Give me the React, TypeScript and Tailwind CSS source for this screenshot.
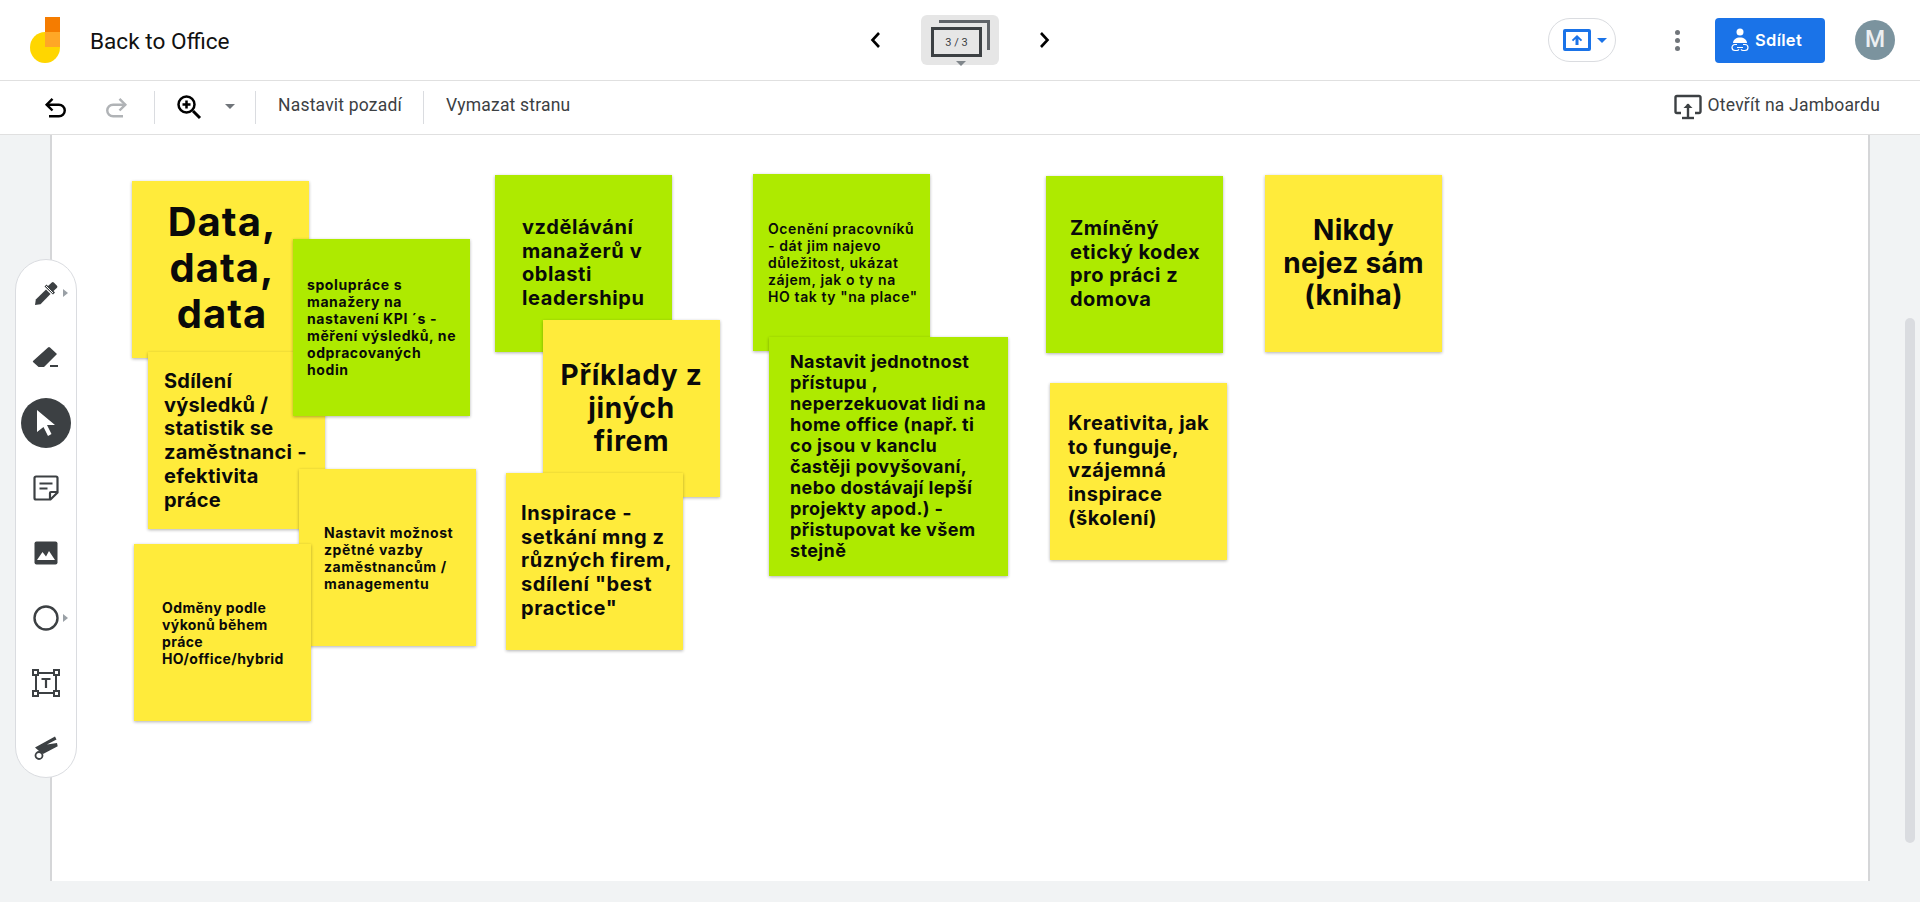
import React from "react";

const notes = [
  { cls: "left-[80px] top-[46px] w-[177px] h-[177px] bg-[#ffeb3b] pl-[3px] pt-[18px] text-center text-[40px] leading-[46px] font-bold tracking-[1px]", lines: ["Data,", "data,", "data"] },
  { cls: "left-[96px] top-[217px] w-[177px] h-[177px] bg-[#ffeb3b] pl-[16px] pt-[18px] text-[20px] leading-[23.7px] font-bold tracking-[0.25px]", lines: ["Sdílení", "výsledků /", "statistik se", "zaměstnanci -", "efektivita", "práce"] },
  { cls: "left-[241px] top-[104px] w-[177px] h-[177px] bg-[#aeea00] pl-[14px] pt-[37px] text-[14px] leading-[17px] font-bold tracking-[0.6px]", lines: ["spolupráce s", "manažery na", "nastavení KPI ´s -", "měření výsledků, ne", "odpracovaných", "hodin"] },
  { cls: "left-[247px] top-[334px] w-[177px] h-[177px] bg-[#ffeb3b] pl-[25px] pt-[55px] text-[14px] leading-[17px] font-bold tracking-[0.6px]", lines: ["Nastavit možnost", "zpětné vazby", "zaměstnancům /", "managementu"] },
  { cls: "left-[82px] top-[409px] w-[177px] h-[177px] bg-[#ffeb3b] pl-[28px] pt-[55px] text-[14px] leading-[17px] font-bold tracking-[0.4px]", lines: ["Odměny podle", "výkonů během", "práce", "HO/office/hybrid"] },
  { cls: "left-[443px] top-[40px] w-[177px] h-[177px] bg-[#aeea00] pl-[27px] pt-[41px] text-[20px] leading-[23.7px] font-bold tracking-[0.6px]", lines: ["vzdělávání", "manažerů v", "oblasti", "leadershipu"] },
  { cls: "left-[491px] top-[185px] w-[177px] h-[177px] bg-[#ffeb3b] pt-[39px] text-center text-[28px] leading-[33px] font-bold tracking-[0.7px]", lines: ["Příklady z", "jiných", "firem"] },
  { cls: "left-[454px] top-[338px] w-[177px] h-[177px] bg-[#ffeb3b] pl-[15px] pt-[29px] text-[20px] leading-[23.7px] font-bold tracking-[0.6px]", lines: ["Inspirace -", "setkání mng z", "různých firem,", "sdílení \"best", "practice\""] },
  { cls: "left-[701px] top-[39px] w-[177px] h-[177px] bg-[#aeea00] pl-[15px] pt-[46px] text-[14px] leading-[17px] font-semibold tracking-[0.6px]", lines: ["Ocenění pracovníků", "- dát jim najevo", "důležitost, ukázat", "zájem, jak o ty na", "HO tak ty \"na place\""] },
  { cls: "left-[717px] top-[202px] w-[239px] h-[239px] bg-[#aeea00] pl-[21px] pt-[14px] text-[18px] leading-[21px] font-bold tracking-[0.37px]", lines: ["Nastavit jednotnost", "přístupu ,", "neperzekuovat lidi na", "home office (např. ti", "co jsou v kanclu", "častěji povyšovaní,", "nebo dostávají lepší", "projekty apod.) -", "přistupovat ke všem", "stejně"] },
  { cls: "left-[994px] top-[41px] w-[177px] h-[177px] bg-[#aeea00] pl-[24px] pt-[41px] text-[20px] leading-[23.7px] font-bold tracking-[0.5px]", lines: ["Zmíněný", "etický kodex", "pro práci z", "domova"] },
  { cls: "left-[1213px] top-[40px] w-[177px] h-[177px] bg-[#ffeb3b] pt-[39px] text-center text-[28px] leading-[32.7px] font-bold tracking-[0.3px]", lines: ["Nikdy", "nejez sám", "(kniha)"] },
  { cls: "left-[998px] top-[248px] w-[177px] h-[177px] bg-[#ffeb3b] pl-[18px] pt-[29px] text-[20px] leading-[23.7px] font-bold tracking-[0.45px]", lines: ["Kreativita, jak", "to funguje,", "vzájemná", "inspirace", "(školení)"] },
];

function Tri({ cls }: { cls: string }) {
  return <span className={"block w-0 h-0 border-x-[5px] border-x-transparent border-t-[5px] " + cls} />;
}
function TriRight() {
  return <span className="absolute left-[47px] top-1/2 -mt-[4px] block w-0 h-0 border-y-[4px] border-y-transparent border-l-[5px] border-l-[#9aa0a6]" />;
}

function Tool({ children, active, caret }: { children: React.ReactNode; active?: boolean; caret?: boolean }) {
  return (
    <div className="relative h-[65px] shrink-0 w-full flex items-center justify-center">
      {active ? <div className="w-[50px] h-[50px] rounded-full bg-[#3c4043] flex items-center justify-center">{children}</div> : children}
      {caret ? <TriRight /> : null}
    </div>
  );
}

export default function App() {
  return (
    <div className="h-[902px] w-[1920px] overflow-hidden flex flex-col bg-white font-['Roboto',sans-serif] text-[#3c4043]">
      <header className="h-[81px] shrink-0 border-b border-[#e0e0e0] flex items-center relative">
        <svg width="32" height="48" viewBox="0 0 32 48" className="ml-[29px] mt-[2px]">
          <ellipse cx="16" cy="30.500" rx="15" ry="15.500" fill="#ffd600" />
          <rect x="16" y="0" width="15" height="15" fill="#f57c00" />
          <rect x="16" y="15" width="15" height="15" fill="#ffa726" />
        </svg>
        <div className="ml-[29px] text-[22.6px] leading-[28px] text-[#111] mt-[4px]">Back to Office</div>
        <div className="flex-1" />
        <div className="absolute left-[866px] top-0 h-[80px] flex items-center">
          <svg width="20" height="20" viewBox="0 0 20 20" fill="none" stroke="#000" strokeWidth="2.600"><path d="M13 3l-6.500 7 6.500 7" /></svg>
          <div className="relative ml-[35px] w-[78px] h-[50px] rounded-[6px] bg-[#e6e6e6]">
            <div className="absolute left-[18px] top-[5px] w-[51px] h-[30px] border-t-[3px] border-r-[3px] border-[#5f6368]" />
            <div className="absolute left-[10px] top-[12px] w-[51px] h-[30px] border-[3px] border-[#3c4043] bg-[#e6e6e6] flex items-center justify-center text-[11px] leading-none text-[#3c4043]">3 / 3</div>
            <div className="absolute left-[35px] top-[46px]"><Tri cls="border-t-[#80868b]" /></div>
          </div>
          <svg width="20" height="20" viewBox="0 0 20 20" fill="none" stroke="#000" strokeWidth="2.600" className="ml-[35px]"><path d="M7 3l6.500 7-6.500 7" /></svg>
        </div>
        <div className="w-[68px] h-[44px] rounded-full border border-[#dadce0] flex items-center pl-[14px] gap-[6px]">
          <div className="w-[28px] h-[22px] border-[3px] border-[#1a73e8] rounded-[2px] flex items-center justify-center">
            <svg width="12" height="12" viewBox="0 0 12 12" fill="#1a73e8"><path d="M6 1L.8 6l1.400 1.200L4.500 5v6h3V5l2.300 2.200L11.200 6z" /></svg>
          </div>
          <Tri cls="border-t-[#1a73e8]" />
        </div>
        <div className="ml-[56px] w-[10px] flex flex-col items-center gap-[3px]">
          <span className="w-[5px] h-[5px] rounded-full bg-[#70757a]" />
          <span className="w-[5px] h-[5px] rounded-full bg-[#70757a]" />
          <span className="w-[5px] h-[5px] rounded-full bg-[#70757a]" />
        </div>
        <button className="ml-[33px] w-[110px] h-[45px] rounded-[4px] bg-[#1a73e8] text-white flex items-center pl-[16px] gap-[4px] text-[16px] font-medium">
          <svg width="18" height="24" viewBox="0 0 18 24" fill="#fff">
            <circle cx="9" cy="4" r="3.500" />
            <path d="M2 15c0-3.500 3.500-5.500 7-5.500s7 2 7 5.500H2z" />
            <path d="M6 16.500H4a3 3 0 000 6h2a3 3 0 002-1.200M12 16.500h2a3 3 0 010 6h-2a3 3 0 01-2-1.200M6 19.500h6" fill="none" stroke="#fff" strokeWidth="1.200" />
          </svg>
          <span className="font-['Inter',sans-serif] text-[16.5px] font-semibold tracking-[0.3px] ml-[2px]">Sdílet</span>
        </button>
        <div className="ml-[30px] mr-[25px] w-[40px] h-[40px] rounded-full bg-[#7b939e] text-[#eceff1] text-[23px] font-medium flex items-center justify-center">M</div>
      </header>

      <div className="h-[54px] shrink-0 border-b border-[#e0e0e0] flex items-center relative pb-[2px] text-[17.5px] tracking-[0.2px]">
        <svg width="28" height="28" viewBox="0 0 24 24" fill="none" stroke="#000" strokeWidth="2.100" className="ml-[42px]"><path d="M9 15 4 10l5-5" /><path d="M4 10h10.500a5 5 0 0 1 0 10H6" /></svg>
        <svg width="28" height="28" viewBox="0 0 24 24" fill="none" stroke="#b0b3b6" strokeWidth="2.100" className="ml-[32px]"><path d="M15 15l5-5-5-5" /><path d="M20 10H9.500a5 5 0 0 0 0 10H18" /></svg>
        <div className="ml-[24px] mt-[2px] w-px h-[33px] bg-[#dadce0]" />
        <svg width="26" height="26" viewBox="0 0 26 26" fill="none" stroke="#000" className="ml-[21px]">
          <circle cx="10.500" cy="10.500" r="8" strokeWidth="2.500" />
          <path d="M17 17l7 7" strokeWidth="3" />
          <path d="M10.500 6.500v8M6.500 10.500h8" strokeWidth="2.500" />
        </svg>
        <div className="ml-[23px]"><Tri cls="border-t-[#70757a]" /></div>
        <div className="ml-[20px] mt-[2px] w-px h-[33px] bg-[#dadce0]" />
        <div className="ml-[22px] mb-[2px] w-[124px] whitespace-nowrap">Nastavit pozadí</div>
        <div className="ml-[21px] mt-[2px] w-px h-[33px] bg-[#dadce0]" />
        <div className="ml-[22px] mb-[2px] whitespace-nowrap">Vymazat stranu</div>
        <div className="flex-1" />
        <svg width="28" height="26" viewBox="0 0 28 26" fill="none" stroke="#3c4043" strokeWidth="2.400" className="mr-[6px]">
          <path d="M7 19H3a1.500 1.500 0 0 1-1.500-1.500v-14A1.500 1.500 0 0 1 3 2h22a1.500 1.500 0 0 1 1.500 1.500v14A1.500 1.500 0 0 1 25 19h-4" />
          <path d="M14 23V10" />
          <path d="M9.500 14L14 9.500l4.500 4.500" fill="#3c4043" stroke="none" />
          <path d="M8 24h12" />
        </svg>
        <div className="mr-[40px] mb-[2px] whitespace-nowrap">Otevřít na Jamboardu</div>
      </div>

      <main className="flex-1 relative bg-[#f1f3f4] pl-[50px]">
        <div className="relative w-[1820px] h-[746px] bg-white border-x-2 border-[#d5d6d8] overflow-hidden font-['Inter',sans-serif] text-[#0a0a0a]">
          {notes.map((n, i) => (
            <div key={i} className={"absolute shadow-[0_1px_3px_rgba(0,0,0,0.3)] whitespace-nowrap " + n.cls}>
              {n.lines.map((l, j) => <div key={j}>{l}</div>)}
            </div>
          ))}
        </div>

        <div className="absolute left-[15px] top-[124px] w-[62px] h-[519px] rounded-[31px] bg-white border border-[#dadce0] flex flex-col overflow-hidden">
          <Tool caret>
            <svg width="26" height="26" viewBox="0 0 26 26" fill="#3c4043">
              <path d="M2 25l.8-5.500L13 9.500l4.500 4.500L7.500 24.200z" />
              <path d="M11.500 6.500l2-2 1.500 1.500 3.800-3.500a1.500 1.500 0 0 1 2 0l3.200 3.200a1.500 1.500 0 0 1 0 2L20.500 11l1.500 1.500-2 2z" />
              <path d="M13 6l7 7" stroke="#fff" strokeWidth="1" />
            </svg>
          </Tool>
          <Tool>
            <svg width="28" height="24" viewBox="0 0 28 24" fill="#3c4043"><path d="M1 15L16 1.500a1.500 1.500 0 0 1 2 0L25 8 12 21H7a1 1 0 0 1-.7-.3L1 16a1 1 0 0 1 0-1z" /><rect x="18" y="19" width="8" height="2" /></svg>
          </Tool>
          <Tool active>
            <svg width="22" height="28" viewBox="0 0 22 28" fill="#fff"><path d="M2 1l18 15h-8l4.500 9-3.500 2-4.500-9L2 23z" /></svg>
          </Tool>
          <Tool>
            <svg width="26" height="26" viewBox="0 0 26 26" fill="none" stroke="#3c4043" strokeWidth="2.200"><path d="M3 1.500h20a1.500 1.500 0 0 1 1.500 1.500v14.500L17.500 24.500H3A1.500 1.500 0 0 1 1.500 23V3A1.500 1.500 0 0 1 3 1.500z" /><path d="M6.500 8.500h13M6.500 13.500h8" /><path d="M17 24v-6a1 1 0 0 1 1-1h6" /></svg>
          </Tool>
          <Tool>
            <svg width="24" height="24" viewBox="0 0 24 24"><rect width="23" height="23" x="0.500" y="0.500" rx="2" fill="#3c4043" /><path d="M3 19l5.500-8 3.500 4.500L15 10l6 9z" fill="#fff" /></svg>
          </Tool>
          <Tool caret>
            <svg width="26" height="26" viewBox="0 0 26 26" fill="none" stroke="#3c4043" strokeWidth="2.400"><circle cx="13" cy="13" r="11.500" /></svg>
          </Tool>
          <Tool>
            <svg width="28" height="28" viewBox="0 0 28 28" fill="none" stroke="#3c4043" strokeWidth="2"><path d="M4 4h20v20H4z" /><rect x="1" y="1" width="5" height="5" fill="#fff" /><rect x="22" y="1" width="5" height="5" fill="#fff" /><rect x="1" y="22" width="5" height="5" fill="#fff" /><rect x="22" y="22" width="5" height="5" fill="#fff" /><path d="M9.500 10h9M14 10v9" strokeWidth="2.200" /></svg>
          </Tool>
          <Tool>
            <svg width="24" height="26" viewBox="0 0 24 26" fill="#3c4043">
              <path d="M1 12.500L21 1.500l1.500 3-9.500 5 10-1.500.7 3.200L9 19l-4-3z" />
              <circle cx="5" cy="20.500" r="3.500" fill="#fff" stroke="#3c4043" strokeWidth="1.800" />
            </svg>
          </Tool>
        </div>

        <div className="absolute left-[1905px] top-[183px] w-[10px] h-[525px] rounded-full bg-[#dadce0]" />
      </main>
    </div>
  );
}
